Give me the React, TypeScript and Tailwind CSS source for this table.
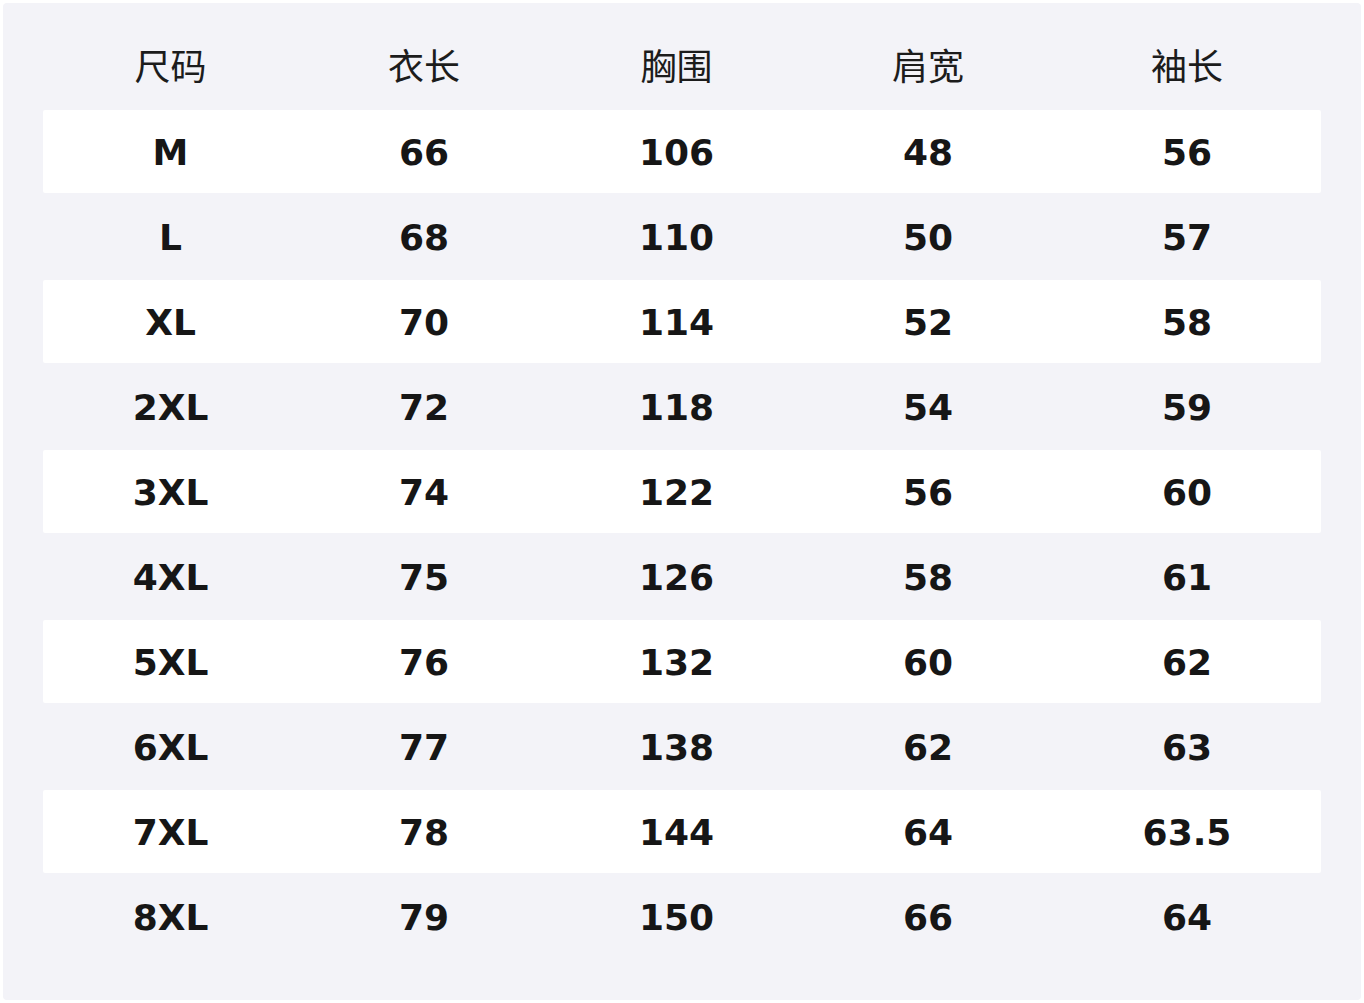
const headers = ["尺码", "衣长", "胸围", "肩宽", "袖长"];

const rows: string[][] = [
  ["M", "66", "106", "48", "56"],
  ["L", "68", "110", "50", "57"],
  ["XL", "70", "114", "52", "58"],
  ["2XL", "72", "118", "54", "59"],
  ["3XL", "74", "122", "56", "60"],
  ["4XL", "75", "126", "58", "61"],
  ["5XL", "76", "132", "60", "62"],
  ["6XL", "77", "138", "62", "63"],
  ["7XL", "78", "144", "64", "63.5"],
  ["8XL", "79", "150", "66", "64"],
];

const cols = "grid grid-cols-[255px_252px_253px_250px_268px]";

export default function App() {
  return (
    <div className="w-[1364px] h-[1003px] bg-white p-[3px]">
      <div className="h-full rounded-[4px] bg-[#f3f3f8] px-[40px] pt-[22px]">
        <div
          className={`${cols} h-[83px] pb-[6px] items-center text-center text-[36px] text-[#1c1c1c] font-['Noto_Sans_CJK_SC',sans-serif]`}
        >
          {headers.map((h) => (
            <div key={h}>{h}</div>
          ))}
        </div>
        <div className="mt-[2px] flex flex-col gap-[2px]">
          {rows.map((r, i) => (
            <div
              key={r[0]}
              className={`${cols} h-[83px] pt-[2px] items-center text-center rounded-[2px] text-[36px] font-bold text-[#161616] font-['DejaVu_Sans',sans-serif] ${
                i % 2 === 0 ? "bg-white" : ""
              }`}
            >
              {r.map((c, j) => (
                <div key={j}>{c}</div>
              ))}
            </div>
          ))}
        </div>
      </div>
    </div>
  );
}
